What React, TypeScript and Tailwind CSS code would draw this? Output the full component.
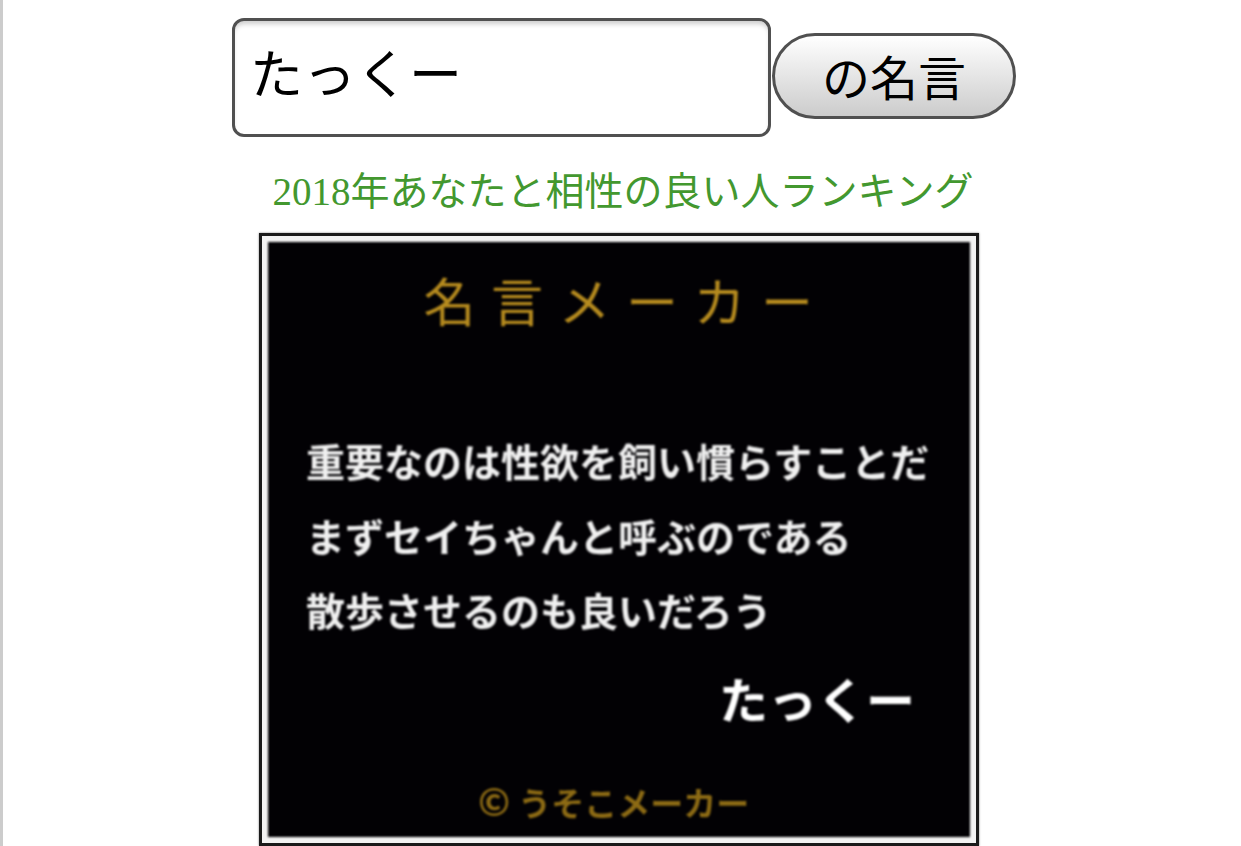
export default function App() {
  const sans = "font-['Noto_Sans_CJK_JP','Noto_Sans',sans-serif]";
  return (
    <div className="flex h-[846px] w-full overflow-hidden bg-white">
      <div className="w-[3px] shrink-0 bg-[#cccccc]" />
      <main className="flex min-w-0 flex-1 flex-col items-center">
        <form className="flex items-center gap-[1px] pl-[4px] pt-[18px]">
          <input
            readOnly
            value="たっくー"
            className={`h-[119px] w-[539px] rounded-[12px] border-[3px] border-[#505050] bg-white pb-[13px] pl-[15px] text-[53px] text-black shadow-[inset_0_5px_5px_-2px_rgba(0,0,0,0.2)] outline-none ${sans}`}
          />
          <button
            type="button"
            className={`mb-[3px] h-[86px] w-[244px] rounded-full border-[3px] border-[#505050] bg-gradient-to-b from-white to-[#cccccc] pb-[3px] text-[48px] leading-none text-black ${sans}`}
          >
            の名言
          </button>
        </form>
        <h1 className="mt-[31px] whitespace-nowrap pl-[2px] text-[39px] font-normal leading-[48px] text-[#43982f] font-['Liberation_Serif','Noto_Sans_CJK_JP',serif]">
          2018年あなたと相性の良い人ランキング
        </h1>
        <div className="mr-[6px] mt-[17px] w-[720px] shrink-0 border-[3px] border-[#1a1a1a] shadow-[0_0_2px_rgba(0,0,0,0.5)]">
          <div className="border-[6px] border-[#f2f2f2]">
            <div className={`flex h-[595px] flex-col bg-[#020104] blur-[1px] ${sans}`}>
              <div className="whitespace-nowrap pl-[14px] pt-[28px] text-center text-[52px] leading-[60px] tracking-[15.5px] text-[#b58a1e]">
                名言メーカー
              </div>
              <div className="mt-[93px] pl-[38px] text-[39px] font-bold leading-[74.5px] text-[#f0f0f0]">
                <p className="whitespace-nowrap">重要なのは性欲を飼い慣らすことだ</p>
                <p className="whitespace-nowrap">まずセイちゃんと呼ぶのである</p>
                <p className="whitespace-nowrap">散歩させるのも良いだろう</p>
              </div>
              <div className="ml-[451px] mt-[21px] text-[49px] font-bold leading-[60px] text-white">
                たっくー
              </div>
              <div className="mt-[52px] whitespace-nowrap pl-[210px] text-[33px] font-bold leading-[40px] text-[#8c6a14]">
                <span className="mr-[8px] text-[38px] leading-[40px]">©</span>うそこメーカー
              </div>
            </div>
          </div>
        </div>
      </main>
    </div>
  );
}
